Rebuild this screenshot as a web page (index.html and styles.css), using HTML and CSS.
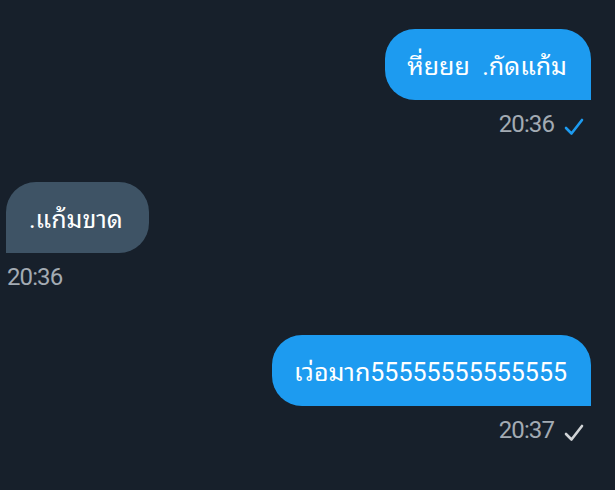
FILE: index.html
```html
<!DOCTYPE html>
<html>
<head>
<meta charset="utf-8">
<link rel="stylesheet" href="styles.css">
</head>
<body>
<div class="chat">
  <div class="msg out first">
    <div class="bubble">หี่ยยย&nbsp; .กัดแก้ม</div>
    <div class="meta"><span class="time">20:36</span><svg class="check read" viewBox="0 0 20 20" width="20" height="20"><path d="M2 11 L7.5 16.5 L18 3" fill="none" stroke="currentColor" stroke-width="2.6" stroke-linecap="round" stroke-linejoin="round"/></svg></div>
  </div>
  <div class="msg in">
    <div class="bubble">.แก้มขาด</div>
    <div class="meta"><span class="time">20:36</span></div>
  </div>
  <div class="msg out last">
    <div class="bubble">เว่อมาก55555555555555</div>
    <div class="meta"><span class="time">20:37</span><svg class="check" viewBox="0 0 20 20" width="20" height="20"><path d="M2 11 L7.5 16.5 L18 3" fill="none" stroke="currentColor" stroke-width="2.6" stroke-linecap="round" stroke-linejoin="round"/></svg></div>
  </div>
</div>
</body>
</html>
```
FILE: styles.css
```css
html, body {
  margin: 0;
  padding: 0;
  background: #17202b;
}
body {
  width: 615px;
  height: 490px;
  overflow: hidden;
  font-family: Roboto, "Noto Sans Thai Looped", "Loma", "Garuda", "Noto Sans Thai", sans-serif;
}
.chat {
  display: flex;
  flex-direction: column;
  padding-top: 29px;
}
.msg {
  display: flex;
  flex-direction: column;
}
.msg.out {
  align-items: flex-end;
  padding-right: 24px;
}
.msg.in {
  align-items: flex-start;
  padding-left: 6px;
  margin-top: 43px;
}
.msg.last {
  margin-top: 43px;
}
.bubble {
  height: 71px;
  box-sizing: border-box;
  display: flex;
  align-items: center;
  padding: 0 24px 2px 22px;
  font-size: 25px;
  color: #ffffff;
  white-space: nowrap;
}
.out .bubble {
  background: #1d9bf0;
  border-radius: 30px 30px 0 30px;
}
.in .bubble {
  background: #3e5365;
  border-radius: 30px 30px 30px 0;
  padding: 0 26px 2px 23px;
}
.meta {
  display: flex;
  align-items: center;
  gap: 10px;
  margin-top: 9px;
  height: 30px;
}
.out .meta {
  padding-right: 7px;
}
.in .meta {
  padding-left: 1px;
}
.time {
  font-size: 24px;
  letter-spacing: -0.9px;
  color: #a3abb3;
}
.check {
  color: #d0d3d6;
  margin-top: 6px;
}
.check.read {
  color: #1d9bf0;
}
```
